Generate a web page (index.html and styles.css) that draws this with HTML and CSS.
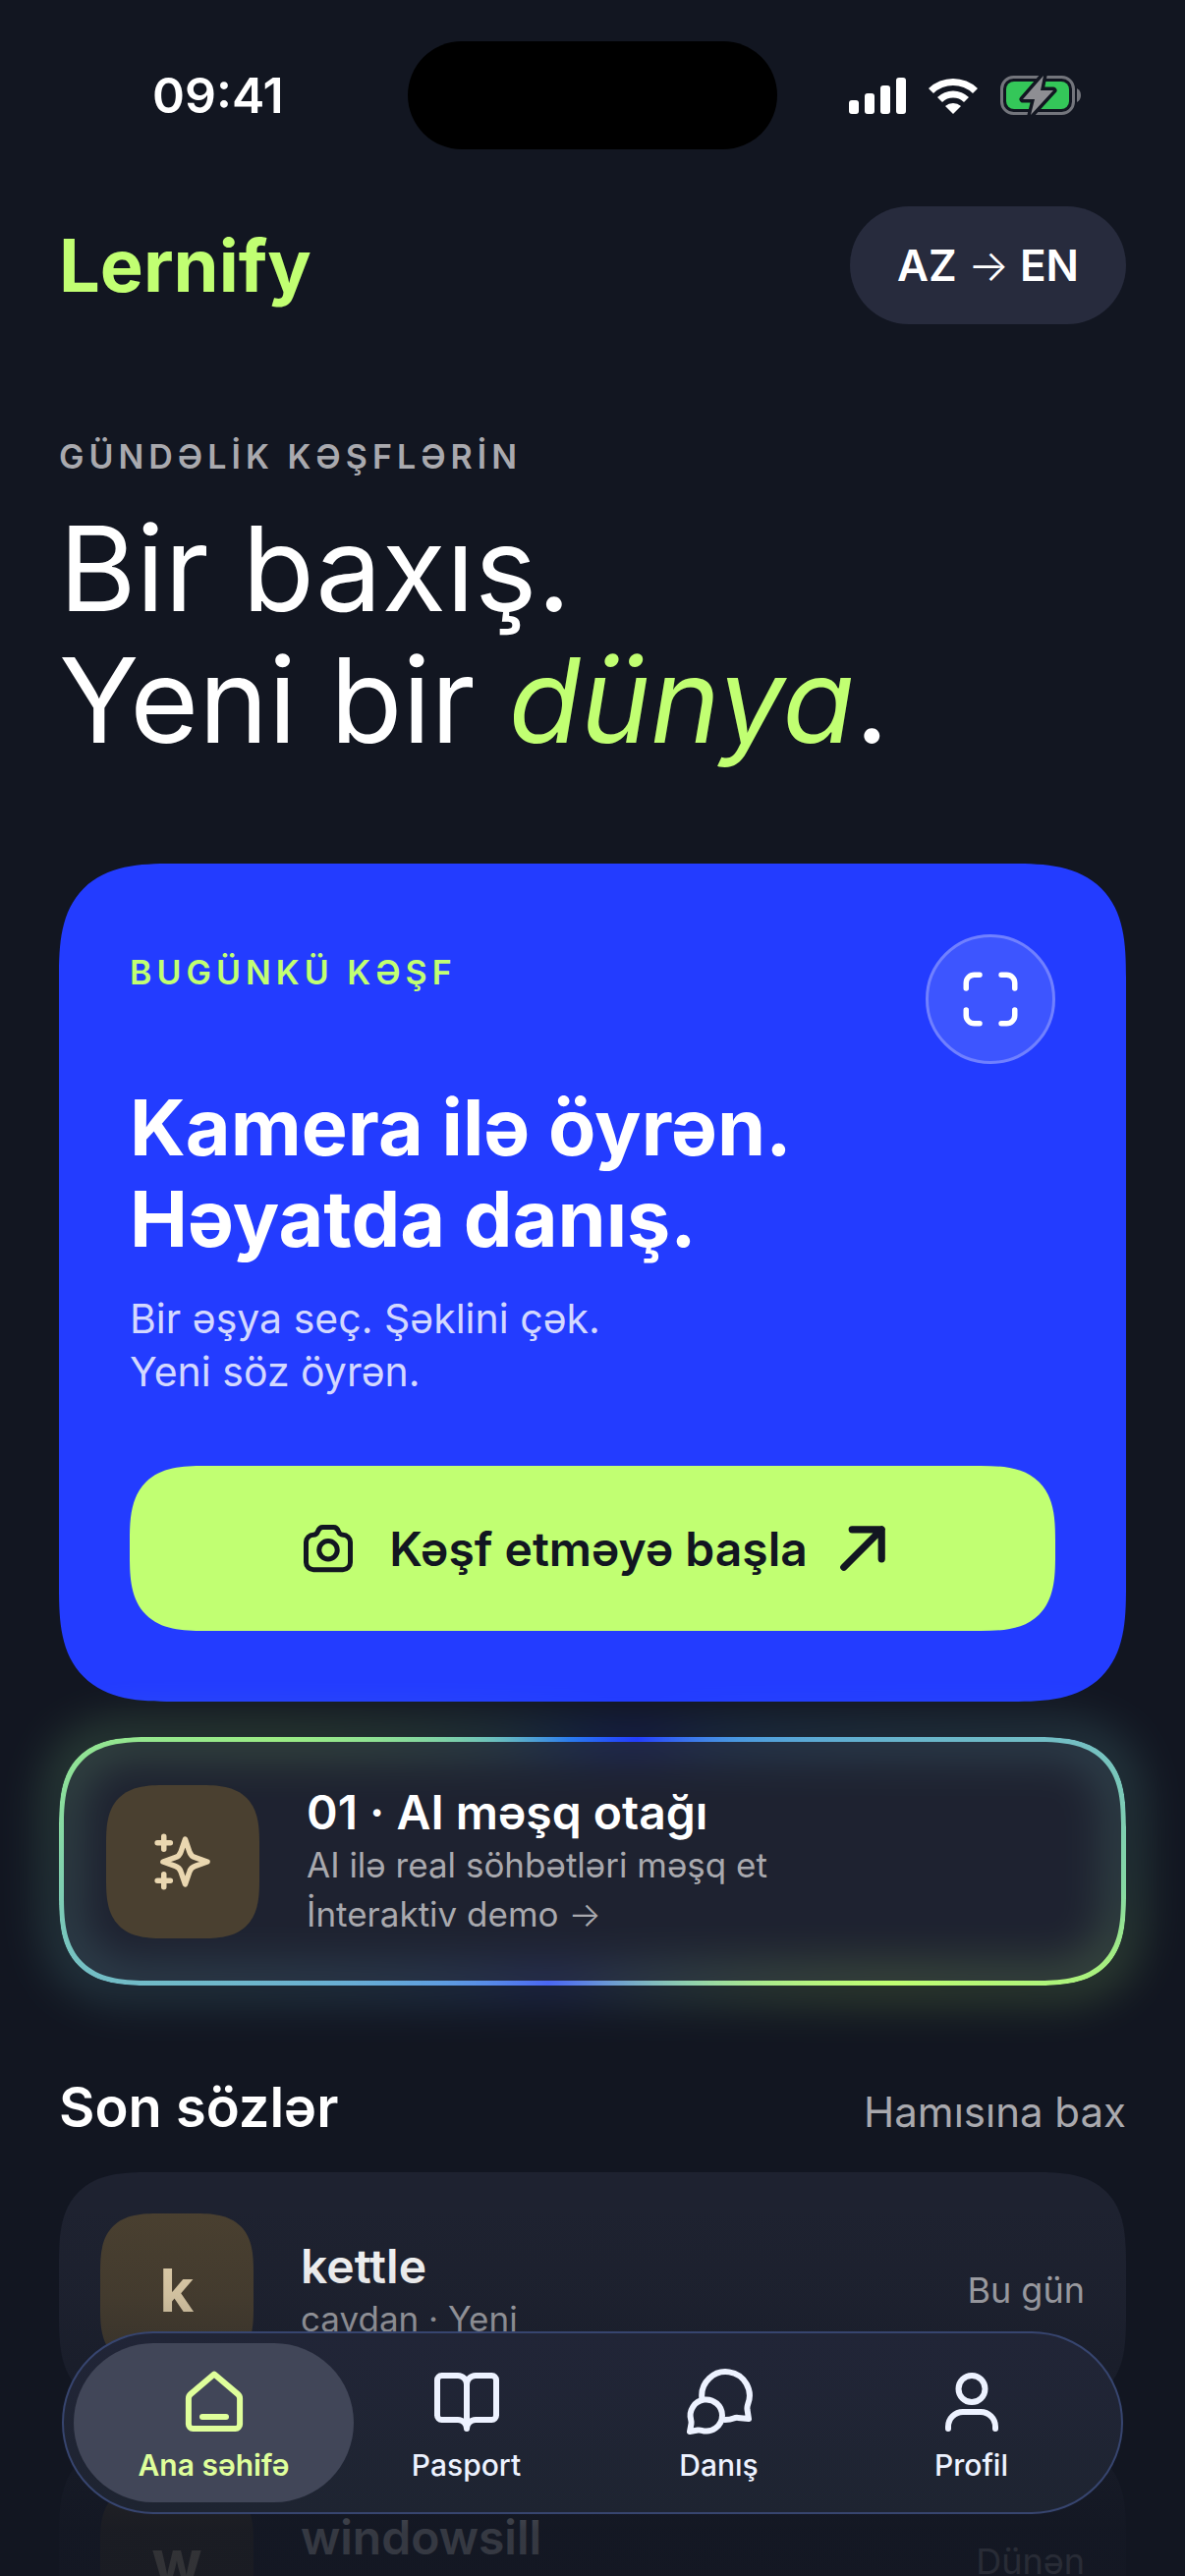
FILE: index.html
```html
<!DOCTYPE html>
<html lang="az">
<head>
  <meta charset="UTF-8" />
  <meta name="viewport" content="width=device-width, initial-scale=1.0"/>
  <title>Lernify</title>
  <link rel="stylesheet" href="styles.css">
</head>
<body>
<div class="screen">

  <div class="status">
    <span class="status-time">09:41</span>
    <span class="island"></span>
    <span class="status-icons">
      <svg class="signal" viewBox="0 0 58 38">
        <rect x="0" y="24" width="10" height="14" rx="3"/>
        <rect x="16" y="17" width="10" height="21" rx="3"/>
        <rect x="32" y="9" width="10" height="29" rx="3"/>
        <rect x="48" y="1" width="10" height="37" rx="3"/>
      </svg>
      <svg class="wifi" viewBox="0 0 52 38">
        <path d="M1 12A36 36 0 0 1 51 12L46 17A29 29 0 0 0 6 17Z"/>
        <path d="M10 21A23 23 0 0 1 42 21L37 26A16 16 0 0 0 15 26Z"/>
        <path d="M18 30A12 12 0 0 1 34 30L26 38Z"/>
      </svg>
      <svg class="battery" viewBox="0 0 83 42">
        <rect x="1.5" y="2.5" width="73" height="37" rx="12" fill="none" stroke="#73757c" stroke-width="3"/>
        <rect x="6" y="7" width="64" height="28" rx="8" fill="#34c759"/>
        <path d="M78 14q4 2 4 7t-4 7z" fill="#73757c"/>
        <path d="M44 1L23 25h12l-4 16L54 16H41z" fill="#8e8e93" stroke="#121621" stroke-width="7" stroke-linejoin="round" paint-order="stroke"/>
      </svg>
    </span>
  </div>

  <header class="header">
    <div class="logo">Lernify</div>
    <button class="lang">AZ <span class="thin">→</span> EN</button>
  </header>

  <main class="content">
    <p class="label">GÜNDƏLİK KƏŞFLƏRİN</p>
    <h1>Bir baxış.<br>Yeni bir <em>dünya</em>.</h1>

    <section class="hero">
      <div class="hero-top">
        <p class="label">BUGÜNKÜ KƏŞF</p>
        <button class="scan" aria-label="Skan et">
          <svg viewBox="0 0 24 24">
            <path d="M3 8V6a3 3 0 0 1 3-3h2M16 3h2a3 3 0 0 1 3 3v2M21 16v2a3 3 0 0 1-3 3h-2M8 21H6a3 3 0 0 1-3-3v-2"/>
          </svg>
        </button>
      </div>
      <h2>Kamera ilə öyrən.<br>Həyatda danış.</h2>
      <p class="hero-text">Bir əşya seç. Şəklini çək.<br>Yeni söz öyrən.</p>
      <button class="start">
        <svg viewBox="0 0 24 24">
          <path d="M3 9.500a3 3 0 0 1 3-3c1.200 0 1.500-.6 1.800-1.400C8.200 4 8.700 3.400 9.800 3.400h4.400c1.100 0 1.600.6 2 1.700.3.800.6 1.400 1.800 1.400a3 3 0 0 1 3 3v8.200a3 3 0 0 1-3 3H6a3 3 0 0 1-3-3z"/>
          <circle cx="12" cy="12.700" r="3.700"/>
        </svg>
        <span>Kəşf etməyə başla</span>
        <svg class="start-arrow" viewBox="2 2 20 20">
          <path d="M4 20L20 4M7.500 4H20v12.500"/>
        </svg>
      </button>
    </section>

    <a class="practice" href="#">
      <span class="practice-glow"></span>
      <span class="tile">
        <svg viewBox="0 0 24 24">
          <path d="M12.900 3.700l1.600 4.600a3.200 3.200 0 0 0 2.100 2.100L21.100 12l-4.500 1.600a3.200 3.200 0 0 0-2.100 2.100L12.900 20.300l-1.600-4.600a3.200 3.200 0 0 0-2.100-2.100L4.700 12l4.500-1.600a3.200 3.200 0 0 0 2.100-2.100z"/>
          <path d="M5 2.600v4.800M2.600 5h4.800M5 16.600v4.800M2.600 19h4.800"/>
        </svg>
      </span>
      <span class="row-text">
        <strong>01 · AI məşq otağı</strong>
        <small>AI ilə real söhbətləri məşq et</small>
        <small>İnteraktiv demo <span class="thin">→</span></small>
      </span>
    </a>

    <div class="section-head">
      <h3>Son sözlər</h3>
      <a href="#">Hamısına bax</a>
    </div>

    <ul class="words">
      <li class="word">
        <span class="tile">k</span>
        <span class="row-text">
          <strong>kettle</strong>
          <small>çaydan · Yeni</small>
        </span>
        <time>Bu gün</time>
      </li>
      <li class="word">
        <span class="tile">w</span>
        <span class="row-text">
          <strong>windowsill</strong>
        </span>
        <time>Dünən</time>
      </li>
    </ul>
  </main>

  <div class="fade"></div>

  <nav class="tabs">
    <a class="tab active" href="#">
      <svg viewBox="0 0 24 24">
        <path d="M12 2.500L20 9.300a2 2 0 0 1 .7 1.500V19.500a1.500 1.500 0 0 1-1.500 1.500H4.800a1.500 1.500 0 0 1-1.500-1.500v-8.700A2 2 0 0 1 4 9.300z"/>
        <path d="M8 17h8"/>
      </svg>
      Ana səhifə
    </a>
    <a class="tab" href="#">
      <svg viewBox="0 0 24 24">
        <path d="M12 6a3 3 0 0 0-3-3H3.500A1.500 1.500 0 0 0 2 4.500v12A1.500 1.500 0 0 0 3.500 18H9a3 3 0 0 1 3 3 3 3 0 0 1 3-3h5.500a1.500 1.500 0 0 0 1.500-1.500v-12A1.500 1.500 0 0 0 20.500 3H15a3 3 0 0 0-3 3zM12 6v15"/>
      </svg>
      Pasport
    </a>
    <a class="tab" href="#">
      <svg viewBox="0 0 24 24">
        <path d="M6.100 10.500A8.100 8.100 0 1 1 21.700 12.800q-.3.900-.2 1.700l.5 3.200-3.600-.4q-.8-.1-1.500.2-1.200.5-3 .5"/>
        <path d="M13 16.500a5.400 5.400 0 1 0-10.600 1.500q.2.700.1 1.300L2 22l2.700-.5q.7-.1 1.300.1A5.400 5.400 0 0 0 13 16.500z"/>
      </svg>
      Danış
    </a>
    <a class="tab" href="#">
      <svg viewBox="0 0 24 24">
        <circle cx="12" cy="7.500" r="4.500"/>
        <path d="M4 21v-.7a5 5 0 0 1 5-5h6a5 5 0 0 1 5 5v.7"/>
      </svg>
      Profil
    </a>
  </nav>

</div>
</body>
</html>
```
FILE: styles.css
```css
* {
  margin: 0;
  padding: 0;
  box-sizing: border-box;
}

:root {
  --bg: #121621;
  --card: #1e2230;
  --lime: #c1ff72;
  --blue: #233cff;
  --muted: #a9a9ae;
  --ring: conic-gradient(from 20deg, #233cff 0deg, #4a9ae0 30deg, #74bfc4 56deg, #86d8a4 73deg, #a5ee80 81deg, #c1ff72 92deg, #8fd0b0 122deg, #4a66f5 180deg, #5f9fe0 212deg, #74bfc4 238deg, #86d8a4 253deg, #9cee84 271deg, #6cc0bd 301deg, #2a7af0 330deg, #233cff 360deg);
}

html, body {
  height: 100%;
  background: var(--bg);
  color: #fff;
  font-family: Inter, "Noto Sans", sans-serif;
}

a {
  color: inherit;
  text-decoration: none;
}

button {
  border: none;
  color: inherit;
  font: inherit;
  cursor: pointer;
}

svg {
  fill: none;
  stroke: currentColor;
  stroke-width: 2;
  stroke-linecap: round;
  stroke-linejoin: round;
}

.screen {
  position: relative;
  height: 100vh;
  overflow: hidden;
}

/* status bar */
.status {
  display: grid;
  grid-template-columns: 1fr 376px 1fr;
  align-items: center;
  padding-top: 42px;
}

.status-time {
  padding-left: 155px;
  font-size: 50px;
  font-weight: 600;
}

.island {
  height: 110px;
  border-radius: 55px;
  background: #000;
}

.status-icons {
  display: flex;
  justify-content: flex-end;
  align-items: center;
  gap: 22px;
  padding-right: 105px;
}

.status-icons svg {
  fill: #fff;
  stroke: none;
}

.signal {
  width: 58px;
  height: 38px;
}

.wifi {
  width: 52px;
  height: 38px;
}

.battery {
  width: 83px;
  height: 42px;
}

/* header */
.header {
  display: flex;
  justify-content: space-between;
  align-items: center;
  padding: 58px 60px 0;
}

.logo {
  color: var(--lime);
  font-size: 74px;
  font-weight: 700;
}

.lang {
  height: 120px;
  padding: 0 48px;
  border-radius: 60px;
  background: #272b3d;
  font-size: 44px;
  font-weight: 600;
}

.thin {
  font-weight: 300;
}

.content {
  padding: 114px 60px 0;
}

.label {
  font-size: 34px;
  line-height: 42px;
  font-weight: 600;
  letter-spacing: 5px;
  color: var(--muted);
}

h1 {
  margin-top: 26px;
  font-size: 120px;
  line-height: 134px;
  font-weight: 400;
}

h1 em {
  color: var(--lime);
}

/* hero card */
.hero {
  margin-top: 99px;
  padding: 72px;
  border-radius: 90px;
  background: var(--blue);
}

.hero-top {
  display: flex;
  justify-content: space-between;
}

.hero-top .label {
  padding-top: 18px;
  color: var(--lime);
}

.scan {
  display: grid;
  place-items: center;
  width: 132px;
  height: 132px;
  border: 3px solid #7080ff;
  border-radius: 50%;
  background: #3d55ff;
}

.scan svg {
  width: 66px;
  height: 66px;
}

h2 {
  margin-top: 18px;
  font-size: 79px;
  line-height: 93px;
  font-weight: 700;
}

.hero-text {
  margin-top: 28px;
  font-size: 41px;
  line-height: 54px;
  color: #d3d8ff;
}

.start {
  display: flex;
  justify-content: center;
  align-items: center;
  gap: 32px;
  width: 100%;
  height: 168px;
  margin-top: 69px;
  border-radius: 60px;
  background: var(--lime);
  color: #121621;
  font-size: 48px;
  font-weight: 600;
}

.start svg {
  width: 60px;
  height: 60px;
}

.start .start-arrow {
  width: 48px;
  height: 48px;
  stroke-width: 3;
}

/* AI practice card */
.practice {
  position: relative;
  display: flex;
  align-items: center;
  gap: 48px;
  margin-top: 36px;
  padding: 48px;
  border-radius: 72px;
  background: var(--card);
}

.practice::before,
.practice-glow::before {
  content: "";
  position: absolute;
  inset: 0;
  padding: 5px;
  border-radius: 72px;
  background: var(--ring);
  mask: linear-gradient(#000 0 0) content-box exclude, linear-gradient(#000 0 0);
}

.practice-glow {
  position: absolute;
  inset: 0;
  filter: blur(24px);
  opacity: 0.3;
}

.practice-glow::before {
  padding: 24px;
  inset: -10px;
  border-radius: 82px;
}

.tile {
  position: relative;
  display: grid;
  place-items: center;
  flex-shrink: 0;
  width: 156px;
  height: 156px;
  border-radius: 45px;
  background: #4a4030;
  color: #ead7b0;
  font-size: 60px;
  font-weight: 700;
}

.tile svg {
  width: 66px;
  height: 66px;
}

.row-text {
  position: relative;
  display: flex;
  flex-direction: column;
  flex: 1;
  min-height: 107px;
}

.row-text strong {
  font-size: 48px;
  line-height: 57px;
  font-weight: 600;
}

.row-text small {
  font-size: 35px;
  line-height: 50px;
  color: var(--muted);
}

/* recent words */
.section-head {
  display: flex;
  justify-content: space-between;
  align-items: baseline;
  margin-top: 88px;
}

h3 {
  font-size: 56px;
  line-height: 72px;
  font-weight: 600;
}

.section-head a {
  font-size: 42px;
  color: var(--muted);
}

.words {
  display: flex;
  flex-direction: column;
  gap: 36px;
  margin-top: 30px;
  list-style: none;
}

.word {
  display: flex;
  align-items: center;
  gap: 48px;
  padding: 42px;
  border-radius: 72px;
  background: var(--card);
}

.word time {
  font-size: 36px;
  color: var(--muted);
}

.fade {
  position: absolute;
  left: 0;
  right: 0;
  bottom: 0;
  height: 380px;
  background: linear-gradient(transparent, rgba(18, 22, 33, 0.12) 25%, rgba(18, 22, 33, 0.85) 88%);
}

/* bottom tabs */
.tabs {
  position: absolute;
  left: 63px;
  right: 63px;
  bottom: 63px;
  display: grid;
  grid-template-columns: repeat(4, 1fr);
  padding: 10px 24px;
  border: 2px solid #37456f;
  border-radius: 93px;
  background: linear-gradient(#212537, #1e2431);
}

.tab {
  display: flex;
  flex-direction: column;
  align-items: center;
  gap: 10px;
  height: 162px;
  margin: 0 -14px;
  padding-top: 24px;
  border-radius: 81px;
  color: #edf2ff;
  font-size: 30px;
  line-height: 36px;
  font-weight: 500;
}

.tab.active {
  background: #414658;
  color: #dfff9b;
  font-weight: 600;
}

.tab svg {
  width: 72px;
  height: 72px;
}

/* smoother corners where the browser has them */
@supports (corner-shape: squircle) {
  .hero, .start, .practice, .practice::before, .practice-glow::before, .tile, .word {
    corner-shape: superellipse(1.5);
  }

  .hero {
    border-radius: 116px;
  }

  .start {
    border-radius: 76px;
  }

  .practice, .practice::before, .practice-glow::before, .word {
    border-radius: 92px;
  }

  .tile {
    border-radius: 60px;
  }
}
```
